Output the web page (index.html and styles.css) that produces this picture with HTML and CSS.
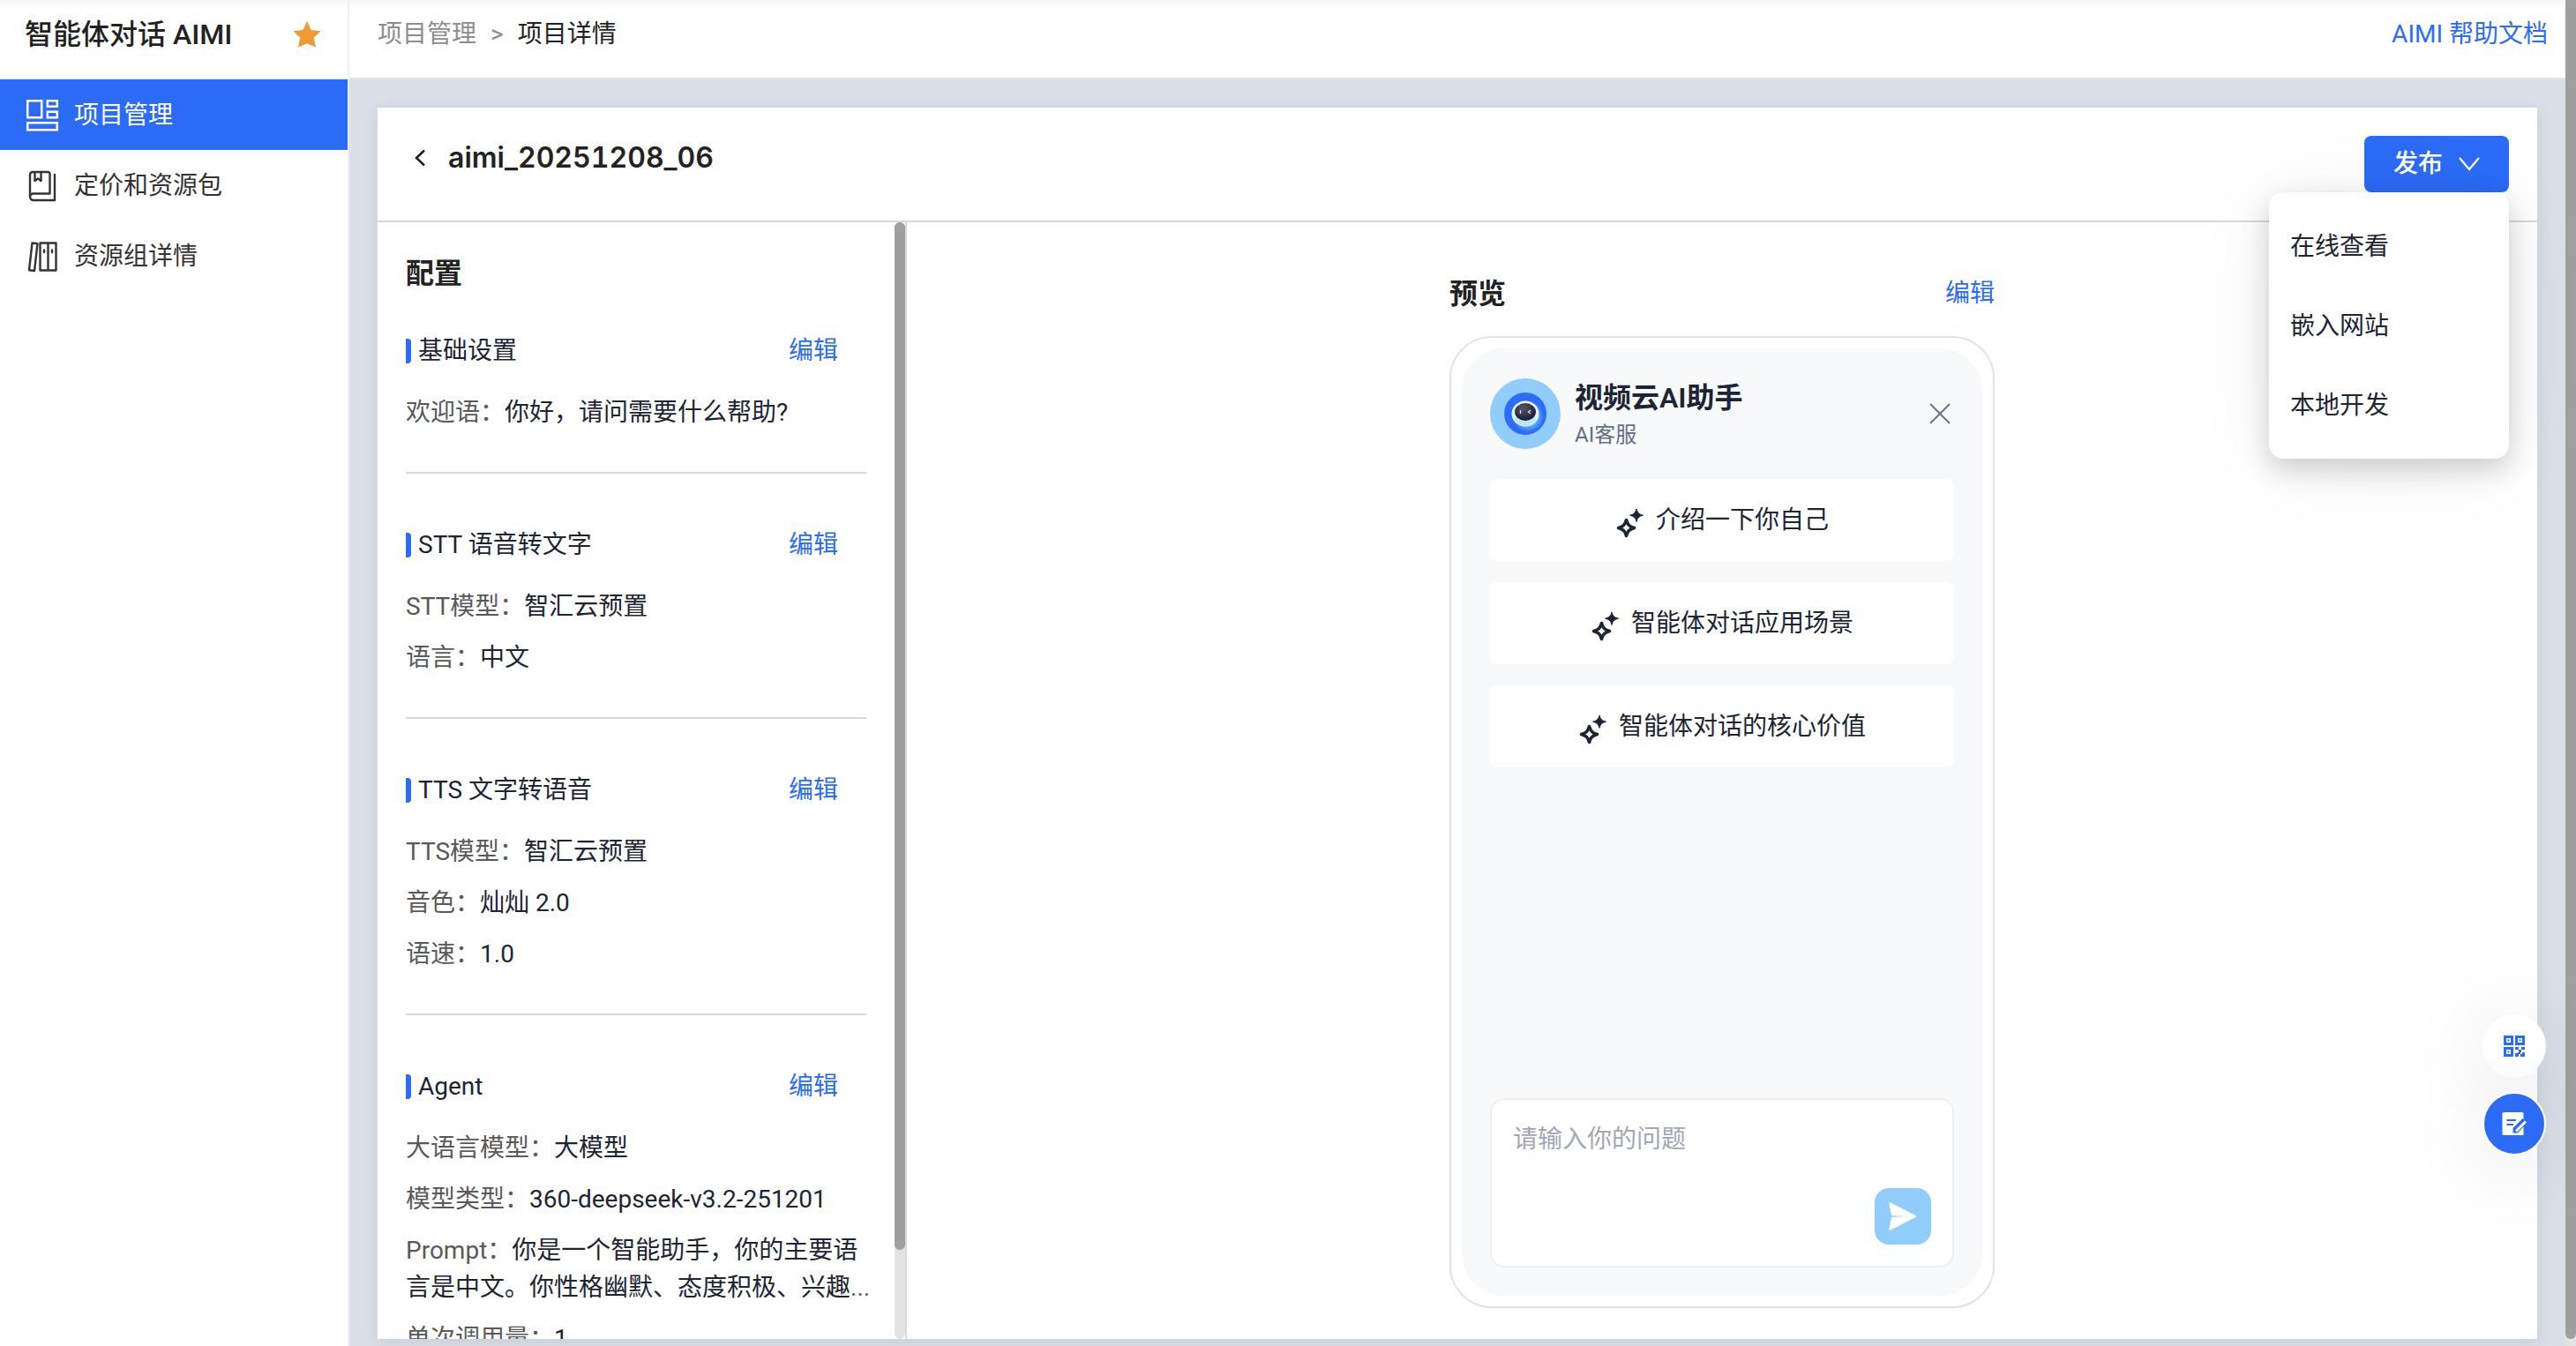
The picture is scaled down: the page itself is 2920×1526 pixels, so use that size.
FILE: index.html
```html
<!DOCTYPE html>
<html lang="zh-CN">
<head>
  <meta charset="UTF-8">
  <title>智能体对话 AIMI</title>
  <link rel="stylesheet" href="styles.css">
</head>
<body>

  <div class="sidebar">
    <div class="brand">
      <h1>智能体对话 AIMI</h1>
      <svg class="star" width="32" height="30" viewBox="0 0 30 28"><path d="M15 0l4.400 9.300 10.200 1.200-7.400 6.900 2.200 10.200L15 23.600 5.600 27.600l2.200-10.200L.4 10.500l10.200-1.200z" fill="#ee9b35"/></svg>
    </div>
    <nav>
      <a href="#" class="nav-item active">
        <svg width="40" height="40" viewBox="0 0 40 40" fill="none" stroke="currentColor" stroke-width="2.500"><path d="M3.200 3.200h16v19h-16zM25.800 3.200h11v6.500h-11zM25.800 15.700h11v6.500h-11zM3.200 28.200h33.600v8H3.200z"/></svg>
        项目管理
      </a>
      <a href="#" class="nav-item">
        <svg width="40" height="40" viewBox="0 0 40 40" fill="none" stroke="currentColor" stroke-width="2.400" stroke-linejoin="round" stroke-linecap="round"><path d="M28.500 28.500V6a2 2 0 0 0-2-2H9a3 3 0 0 0-3 3v25a4 4 0 0 0 4 4h24V7M6 32a3.800 3.800 0 0 1 3.800-3.500h18.700M11.500 4v10l3.500-2.500 3.500 2.500V4"/></svg>
        定价和资源包
      </a>
      <a href="#" class="nav-item">
        <svg width="40" height="40" viewBox="0 0 40 40" fill="none" stroke="currentColor" stroke-width="2.400" stroke-linejoin="round" stroke-linecap="round"><path d="M8.500 4.500l6 .8-3.500 30.700-6-.8zM17.500 4.500h9v31h-9zM26.500 4.500h9v31h-9zM22 12.500v2.500M31 12.500v2.500"/></svg>
        资源组详情
      </a>
    </nav>
  </div>

  <div class="main">
    <div class="topbar">
      <div class="breadcrumb">
        <a href="#">项目管理</a>
        <span class="sep">&gt;</span>
        <span>项目详情</span>
      </div>
      <a href="#" class="link">AIMI 帮助文档</a>
    </div>

    <div class="content">
      <div class="card">
        <div class="card-header">
          <div class="project">
            <button class="icon-btn" aria-label="返回">
              <svg width="16" height="20" viewBox="0 0 16 20" fill="none" stroke="#222" stroke-width="2.600"><path d="M13 1.500L4 10l9 8.500"/></svg>
            </button>
            <h2>aimi_20251208_06</h2>
          </div>
          <div class="publish">
            <button class="publish-btn">
              发布
              <svg width="24" height="16" viewBox="0 0 24 16" fill="none" stroke="#fff" stroke-width="2.200"><path d="M1 1l11 13L23 1"/></svg>
            </button>
            <div class="publish-menu">
              <a href="#">在线查看</a>
              <a href="#">嵌入网站</a>
              <a href="#">本地开发</a>
            </div>
          </div>
        </div>

        <div class="card-body">
          <div class="config">
            <div class="config-list">
              <h3>配置</h3>

              <div class="section">
                <div class="section-head">
                  <h4>基础设置</h4>
                  <a href="#" class="link">编辑</a>
                </div>
                <p><span>欢迎语：</span>你好，请问需要什么帮助?</p>
              </div>

              <div class="section">
                <div class="section-head">
                  <h4>STT 语音转文字</h4>
                  <a href="#" class="link">编辑</a>
                </div>
                <p><span>STT模型：</span>智汇云预置</p>
                <p><span>语言：</span>中文</p>
              </div>

              <div class="section">
                <div class="section-head">
                  <h4>TTS 文字转语音</h4>
                  <a href="#" class="link">编辑</a>
                </div>
                <p><span>TTS模型：</span>智汇云预置</p>
                <p><span>音色：</span>灿灿 2.0</p>
                <p><span>语速：</span>1.0</p>
              </div>

              <div class="section">
                <div class="section-head">
                  <h4>Agent</h4>
                  <a href="#" class="link">编辑</a>
                </div>
                <p><span>大语言模型：</span>大模型</p>
                <p><span>模型类型：</span>360-deepseek-v3.2-251201</p>
                <p class="prompt"><span>Prompt：</span>你是一个智能助手，你的主要语言是中文。你性格幽默、态度积极、兴趣<span>...</span></p>
                <p><span>单次调用量：</span>1</p>
              </div>
            </div>
            <div class="scrollbar"><div class="thumb config-thumb"></div></div>
          </div>

          <div class="preview">
            <div class="preview-head">
              <h3>预览</h3>
              <a href="#" class="link">编辑</a>
            </div>
            <div class="phone">
              <div class="screen">
                <div class="chat-head">
                  <svg width="80" height="80" viewBox="0 0 80 80">
                    <defs>
                      <radialGradient id="glow" cx="0.5" cy="0.5" r="0.5">
                        <stop offset="0.5" stop-color="#6fc4fb"/>
                        <stop offset="1" stop-color="#2d6cf6"/>
                      </radialGradient>
                      <radialGradient id="face" cx="0.4" cy="0.3" r="0.7">
                        <stop offset="0" stop-color="#55566a"/>
                        <stop offset="1" stop-color="#1b1c2c"/>
                      </radialGradient>
                    </defs>
                    <circle cx="40" cy="40" r="40" fill="#91cdfb"/>
                    <circle cx="40" cy="40" r="24" fill="#2d6cf6"/>
                    <circle cx="43" cy="43" r="18" fill="url(#glow)"/>
                    <ellipse cx="40" cy="40" rx="15.500" ry="14.500" fill="#e4f4fe"/>
                    <path d="M28 44a12 10 0 0 0 24 0z" fill="#bfe5fc"/>
                    <ellipse cx="40" cy="38" rx="12" ry="10" fill="url(#face)"/>
                    <path d="M34.500 36v4M46 36l-2.500 2 2.500 2" stroke="#dfe6f5" stroke-width="1.300" fill="none"/>
                  </svg>
                  <div class="chat-name">
                    <strong>视频云AI助手</strong>
                    <span>AI客服</span>
                  </div>
                  <button class="icon-btn" aria-label="关闭">
                    <svg width="32" height="32" viewBox="0 0 32 32" stroke="#667085" stroke-width="1.800"><path d="M5 5l22 22M27 5L5 27"/></svg>
                  </button>
                </div>

                <div class="questions">
                  <button>
                    <svg width="32" height="34" viewBox="0 0 32 34"><path d="M12.500 12.500c1.500 5.500 3.500 7.500 9 9-5.500 1.500-7.500 3.500-9 9-1.500-5.500-3.500-7.500-9-9 5.500-1.500 7.500-3.500 9-9z" fill="none" stroke="#1d2433" stroke-width="3.600" stroke-linejoin="round"/><path d="M24 0c1.300 4.500 2.700 5.900 7.500 7.200-4.800 1.300-6.200 2.700-7.500 7.200-1.300-4.500-2.700-5.900-7.500-7.200C21.300 5.900 22.700 4.500 24 0z" fill="#1d2433" stroke="#1d2433"/></svg>
                    介绍一下你自己
                  </button>
                  <button>
                    <svg width="32" height="34" viewBox="0 0 32 34"><path d="M12.500 12.500c1.500 5.500 3.500 7.500 9 9-5.500 1.500-7.500 3.500-9 9-1.500-5.500-3.500-7.500-9-9 5.500-1.500 7.500-3.500 9-9z" fill="none" stroke="#1d2433" stroke-width="3.600" stroke-linejoin="round"/><path d="M24 0c1.300 4.500 2.700 5.900 7.500 7.200-4.800 1.300-6.200 2.700-7.500 7.200-1.300-4.500-2.700-5.900-7.500-7.200C21.300 5.900 22.700 4.500 24 0z" fill="#1d2433" stroke="#1d2433"/></svg>
                    智能体对话应用场景
                  </button>
                  <button>
                    <svg width="32" height="34" viewBox="0 0 32 34"><path d="M12.500 12.500c1.500 5.500 3.500 7.500 9 9-5.500 1.500-7.500 3.500-9 9-1.500-5.500-3.500-7.500-9-9 5.500-1.500 7.500-3.500 9-9z" fill="none" stroke="#1d2433" stroke-width="3.600" stroke-linejoin="round"/><path d="M24 0c1.300 4.500 2.700 5.900 7.500 7.200-4.800 1.300-6.200 2.700-7.500 7.200-1.300-4.500-2.700-5.900-7.500-7.200C21.300 5.900 22.700 4.500 24 0z" fill="#1d2433" stroke="#1d2433"/></svg>
                    智能体对话的核心价值
                  </button>
                </div>

                <div class="composer">
                  <textarea placeholder="请输入你的问题" aria-label="请输入你的问题"></textarea>
                  <button class="send-btn" aria-label="发送">
                    <svg width="34" height="34" viewBox="0 0 34 34"><path d="M3.200 1.500L31.500 16a1.200 1.200 0 0 1 0 2L3.200 32.500c-1 .5-2-.2-1.900-1.300L4 18.600c.1-.5.5-.8 1-.8l18-.8-18-.8c-.5 0-.9-.3-1-.8L1.300 2.800C1.200 1.700 2.200 1 3.200 1.500z" fill="#fff"/></svg>
                  </button>
                </div>
              </div>
            </div>
          </div>
        </div>
      </div>
    </div>
  </div>

  <div class="scrollbar"><div class="thumb page-thumb"></div></div>

  <div class="float-tools">
    <button class="float-btn" aria-label="二维码">
      <svg width="24" height="24" viewBox="0 0 24 24" fill="#2c6bf6"><path fill-rule="evenodd" d="M0 0h11v11H0zM3 3v5h5V3zM13 0h11v11H13zM16 3v5h5V3zM0 13h11v11H0zM3 16v5h5v-5z"/><path d="M4.500 4.500h2v2h-2zM17.500 4.500h2v2h-2zM4.500 17.500h2v2h-2zM13 13h4v3h-4zM20 13h4v3h-4zM17 16h3v3h-3zM13 20h3v-1h3v2h-2v3h-4zM21 19h3v5h-5v-3h2z"/></svg>
    </button>
    <button class="float-btn primary" aria-label="反馈">
      <svg width="28" height="28" viewBox="0 0 28 28"><path d="M2 1h21a1.500 1.500 0 0 1 1.500 1.500V27H2A1.500 1.500 0 0 1 .5 25.500v-23A1.500 1.500 0 0 1 2 1z" fill="#fff"/><path d="M5.500 10H16M5.500 15H13" stroke="#2c6bf6" stroke-width="2.200"/><path d="M12.500 24.500v-5.500L23.500 8l5 5-10.500 11.500z" fill="#2c6bf6"/><path d="M16 22.500L27 11.500" stroke="#fff" stroke-width="3"/></svg>
    </button>
  </div>

</body>
</html>
```
FILE: styles.css
```css
* {
  box-sizing: border-box;
}

body {
  margin: 0;
  height: 100vh;
  display: flex;
  overflow: hidden;
  font-family: Roboto, "Noto Sans CJK SC", sans-serif;
  font-size: 28px;
  line-height: 42px;
  color: #1d2433;
  background: #d9dee7;
}

h1, h2, h3, h4, p {
  margin: 0;
}

a {
  color: inherit;
  text-decoration: none;
}

button {
  font: inherit;
  color: inherit;
  border: none;
  cursor: pointer;
}

.link {
  color: #2c6bf6;
}

.icon-btn {
  display: flex;
  padding: 0;
  background: none;
}

/* sidebar */
.sidebar {
  width: 396px;
  flex-shrink: 0;
  background: #fff;
  border-right: 2px solid #eceff6;
  box-shadow: inset 0 12px 12px -12px rgba(0, 0, 0, 0.08);
}

.brand {
  height: 90px;
  padding: 0 30px 10px 28px;
  display: flex;
  align-items: center;
  justify-content: space-between;
  border-bottom: 2px solid #eceff6;
}

.brand h1 {
  font-size: 32px;
  font-weight: 500;
  color: #222;
}

.nav-item {
  height: 80px;
  padding: 2px 0 0 28px;
  display: flex;
  align-items: center;
  gap: 16px;
  color: #333;
}

.nav-item.active {
  background: #2c6bf6;
  color: #fff;
}

/* main */
.main {
  flex: 1;
  min-width: 0;
  display: flex;
  flex-direction: column;
}

.topbar {
  height: 90px;
  padding: 0 20px 10px 32px;
  display: flex;
  align-items: center;
  justify-content: space-between;
  background: #fff;
  border-bottom: 2px solid #e1e5ed;
  box-shadow: inset 0 12px 12px -12px rgba(0, 0, 0, 0.08);
}

.breadcrumb {
  display: flex;
  gap: 16px;
  color: #222;
}

.breadcrumb a, .sep {
  color: #8c8c8c;
}

.content {
  flex: 1;
  min-height: 0;
  padding: 32px 32px 8px;
}

.card {
  height: 100%;
  display: flex;
  flex-direction: column;
  background: #fff;
  box-shadow: 0 4px 16px rgba(100, 120, 140, 0.14);
}

.card-header {
  height: 130px;
  flex-shrink: 0;
  padding: 0 32px 0 40px;
  display: flex;
  align-items: center;
  justify-content: space-between;
  border-bottom: 2px solid #d9d9d9;
}

.project {
  display: flex;
  align-items: center;
  gap: 24px;
  padding-bottom: 14px;
}

.project h2 {
  font-family: Inter, "Noto Sans CJK SC", sans-serif;
  font-size: 32px;
  font-weight: 600;
  font-variant-numeric: tabular-nums;
  color: #222;
}

.publish {
  position: relative;
}

.publish-btn {
  width: 164px;
  height: 64px;
  display: flex;
  align-items: center;
  justify-content: center;
  gap: 18px;
  background: #2c6bf6;
  color: #fff;
  font-weight: 500;
  border-radius: 8px;
}

.publish-menu {
  position: absolute;
  top: 100%;
  right: 0;
  width: 272px;
  padding: 17px 0 15px;
  background: #fff;
  border-radius: 16px;
  box-shadow: 0 12px 32px rgba(0, 0, 0, 0.18), 0 6px 96px rgba(0, 0, 0, 0.06);
}

.publish-menu a {
  display: block;
  padding: 0 24px;
  line-height: 90px;
}

.card-body {
  flex: 1;
  min-height: 0;
  display: flex;
}

/* config */
.config {
  width: 600px;
  flex-shrink: 0;
  display: flex;
  border-right: 2px solid #d9d9d9;
}

.config-list {
  flex: 1;
  padding: 34px 32px 0;
  overflow: hidden;
}

h3 {
  font-size: 32px;
  font-weight: 600;
  line-height: 48px;
  color: #222;
}

.config-list h3 {
  margin-bottom: 42px;
}

.section {
  padding-bottom: 46px;
  margin-bottom: 59px;
  border-bottom: 2px solid #d9d9d9;
}

.section-head {
  display: flex;
  align-items: center;
  justify-content: space-between;
  height: 44px;
  padding-right: 32px;
  margin-bottom: 27px;
}

.section-head h4 {
  display: flex;
  align-items: center;
  gap: 8px;
  font-size: 28px;
  font-weight: 400;
}

.section-head h4::before {
  content: "";
  width: 6px;
  height: 28px;
  background: #2c6bf6;
  border-radius: 0 4px 4px 0;
}

.section p + p {
  margin-top: 16px;
}

.section p span {
  color: #595959;
}

.section .prompt {
  margin-right: -8px;
}

.scrollbar {
  width: 12px;
  flex-shrink: 0;
  background: #e3e3e3;
}

.thumb {
  background: #9f9f9f;
  border-radius: 6px;
}

.config .scrollbar {
  border-radius: 6px;
}

.config-thumb {
  height: 92%;
}

.page-thumb {
  height: 99.5%;
  border-radius: 0 0 6px 6px;
}

/* preview */
.preview {
  flex: 1;
  padding: 57px 0 35px;
  display: flex;
  flex-direction: column;
  align-items: center;
}

.preview-head {
  width: 618px;
  display: flex;
  align-items: center;
  justify-content: space-between;
  margin-bottom: 24px;
}

.phone {
  width: 618px;
  flex: 1;
  min-height: 0;
  padding: 12px;
  border: 2px solid #dfe4ea;
  border-radius: 48px;
}

.screen {
  height: 100%;
  padding: 32px;
  display: flex;
  flex-direction: column;
  background: #f7f9fb;
  border-radius: 48px;
}

.chat-head {
  display: flex;
  align-items: center;
  gap: 16px;
  margin-bottom: 32px;
}

.chat-name {
  flex: 1;
  display: flex;
  flex-direction: column;
}

.chat-name strong {
  font-size: 32px;
  font-weight: 600;
  line-height: 48px;
}

.chat-name span {
  font-size: 24px;
  line-height: 36px;
  color: #667085;
}

.questions {
  flex: 1;
  display: flex;
  flex-direction: column;
  gap: 24px;
}

.questions button {
  height: 93px;
  padding: 0;
  display: flex;
  align-items: center;
  justify-content: center;
  gap: 14px;
  background: #fff;
  border-radius: 8px;
}

.questions svg {
  margin-top: 8px;
}

.composer {
  height: 192px;
  padding: 24px;
  display: flex;
  background: #fff;
  border: 2px solid #eceff3;
  border-radius: 16px;
}

.composer textarea {
  flex: 1;
  padding: 0;
  border: none;
  outline: none;
  resize: none;
  background: none;
  font: inherit;
}

.composer textarea::placeholder {
  color: #a0a7b8;
}

.send-btn {
  width: 64px;
  height: 64px;
  padding: 0;
  align-self: flex-end;
  display: flex;
  align-items: center;
  justify-content: center;
  background: #91cdfb;
  border-radius: 16px;
}

/* floating buttons */
.float-tools {
  position: fixed;
  right: 34px;
  bottom: 216px;
  display: flex;
  flex-direction: column;
  gap: 16px;
}

.float-btn {
  width: 72px;
  height: 72px;
  padding: 0;
  display: flex;
  align-items: center;
  justify-content: center;
  background: #fff;
  border-radius: 50%;
  box-shadow: 0 12px 96px rgba(0, 0, 0, 0.12);
}

.float-btn.primary {
  background: #2c6bf6;
  border: 2px solid #fff;
}
```
